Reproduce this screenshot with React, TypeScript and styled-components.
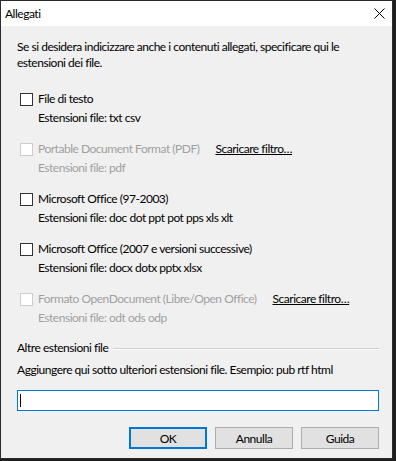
import React from 'react';
import styled, { createGlobalStyle } from 'styled-components';

const GlobalStyle = createGlobalStyle`
  html, body {
    margin: 0;
    padding: 0;
    background: #1e1e1e;
  }
  body {
    font-family: Lato, 'Open Sans', sans-serif;
    font-size: 12px;
    letter-spacing: -0.48px;
    color: #000;
  }
`;

const Window = styled.div`
  width: 393px;
  height: 459px;
  box-sizing: border-box;
  border: 1px solid #2b2b2b;
  background: #f0f0f0;
  display: flex;
  flex-direction: column;
`;

const TitleBar = styled.div`
  height: 25px;
  background: #fff;
  display: flex;
  align-items: center;
  justify-content: space-between;
  padding: 0 7px 0 4px;
`;

const TitleText = styled.span`
  font-size: 12px;
  line-height: 16px;
`;

const Body = styled.div`
  flex: 1;
  display: flex;
  flex-direction: column;
  padding: 13px 13px 0 16px;
`;

const Line = styled.div<{ $disabled?: boolean }>`
  line-height: 16px;
  white-space: nowrap;
  color: ${(p) => (p.$disabled ? '#a0a0a0' : '#000')};
`;

const Intro = styled.div`
  line-height: 16px;
  width: 340px;
`;

const Groups = styled.div`
  display: flex;
  flex-direction: column;
  gap: 15px;
  margin-top: 20px;
`;

const Group = styled.div`
  display: flex;
  flex-direction: column;
  gap: 3px;
`;

const CheckRow = styled.label`
  display: flex;
  align-items: center;
  padding-left: 3px;
  line-height: 16px;
  white-space: nowrap;
`;

const Box = styled.span<{ $disabled?: boolean }>`
  width: 13px;
  height: 13px;
  box-sizing: border-box;
  border: 1px solid ${(p) => (p.$disabled ? '#cccccc' : '#333333')};
  background: #fff;
  margin-right: 5px;
  flex: none;
`;

const LabelText = styled.span<{ $disabled?: boolean }>`
  color: ${(p) => (p.$disabled ? '#a0a0a0' : '#000')};
`;

const FilterLink = styled.span`
  margin-left: 16px;
  text-decoration: underline;
  color: #000;
`;

const ExtLine = styled(Line)`
  padding-left: 21px;
`;

const SectionHeader = styled.div`
  display: flex;
  align-items: center;
  margin-top: 14px;
  line-height: 16px;
  gap: 5px;
`;

const Rule = styled.div`
  flex: 1;
  height: 1px;
  background: #d0d0d0;
  border-bottom: 1px solid #fff;
  margin-top: 1px;
`;

const Hint = styled(Line)`
  margin-top: 6px;
`;

const Input = styled.div`
  margin-top: 12px;
  height: 21px;
  box-sizing: border-box;
  border: 1px solid #0078d7;
  background: #fff;
  display: flex;
  align-items: center;
  padding-left: 2px;
`;

const Caret = styled.span`
  width: 1px;
  height: 13px;
  background: #000;
`;

const Buttons = styled.div`
  display: flex;
  justify-content: flex-end;
  gap: 8px;
  margin-top: 16px;
`;

const Button = styled.button<{ $default?: boolean }>`
  width: 78px;
  height: 22px;
  box-sizing: border-box;
  font-family: inherit;
  font-size: 12px;
  letter-spacing: inherit;
  color: #000;
  background: #e1e1e1;
  border: ${(p) => (p.$default ? '2px solid #0078d7' : '1px solid #adadad')};
  padding: 0;
`;

const CloseIcon = () => (
  <svg width="11" height="11" viewBox="0 0 11 11">
    <path d="M0.5 0.5 L10.5 10.5 M10.5 0.5 L0.5 10.5" stroke="#000" strokeWidth="1" fill="none" />
  </svg>
);

const options = [
  { label: 'File di testo', ext: 'txt csv' },
  { label: 'Portable Document Format (PDF)', ext: 'pdf', disabled: true },
  { label: 'Microsoft Office (97-2003)', ext: 'doc dot ppt pot pps xls xlt' },
  { label: 'Microsoft Office (2007 e versioni successive)', ext: 'docx dotx pptx xlsx' },
  { label: 'Formato OpenDocument (Libre/Open Office)', ext: 'odt ods odp', disabled: true },
];

export default function App() {
  return (
    <>
      <GlobalStyle />
      <Window>
        <TitleBar>
          <TitleText>Allegati</TitleText>
          <CloseIcon />
        </TitleBar>
        <Body>
          <Intro>
            Se si desidera indicizzare anche i contenuti allegati, specificare qui le estensioni dei file.
          </Intro>
          <Groups>
            {options.map((o) => (
              <Group key={o.label}>
                <CheckRow>
                  <Box $disabled={o.disabled} />
                  <LabelText $disabled={o.disabled}>{o.label}</LabelText>
                  {o.disabled && <FilterLink>Scaricare filtro…</FilterLink>}
                </CheckRow>
                <ExtLine $disabled={o.disabled}>Estensioni file: {o.ext}</ExtLine>
              </Group>
            ))}
          </Groups>
          <SectionHeader>
            <span>Altre estensioni file</span>
            <Rule />
          </SectionHeader>
          <Hint>Aggiungere qui sotto ulteriori estensioni file. Esempio: pub rtf html</Hint>
          <Input>
            <Caret />
          </Input>
          <Buttons>
            <Button $default>OK</Button>
            <Button>Annulla</Button>
            <Button>Guida</Button>
          </Buttons>
        </Body>
      </Window>
    </>
  );
}
